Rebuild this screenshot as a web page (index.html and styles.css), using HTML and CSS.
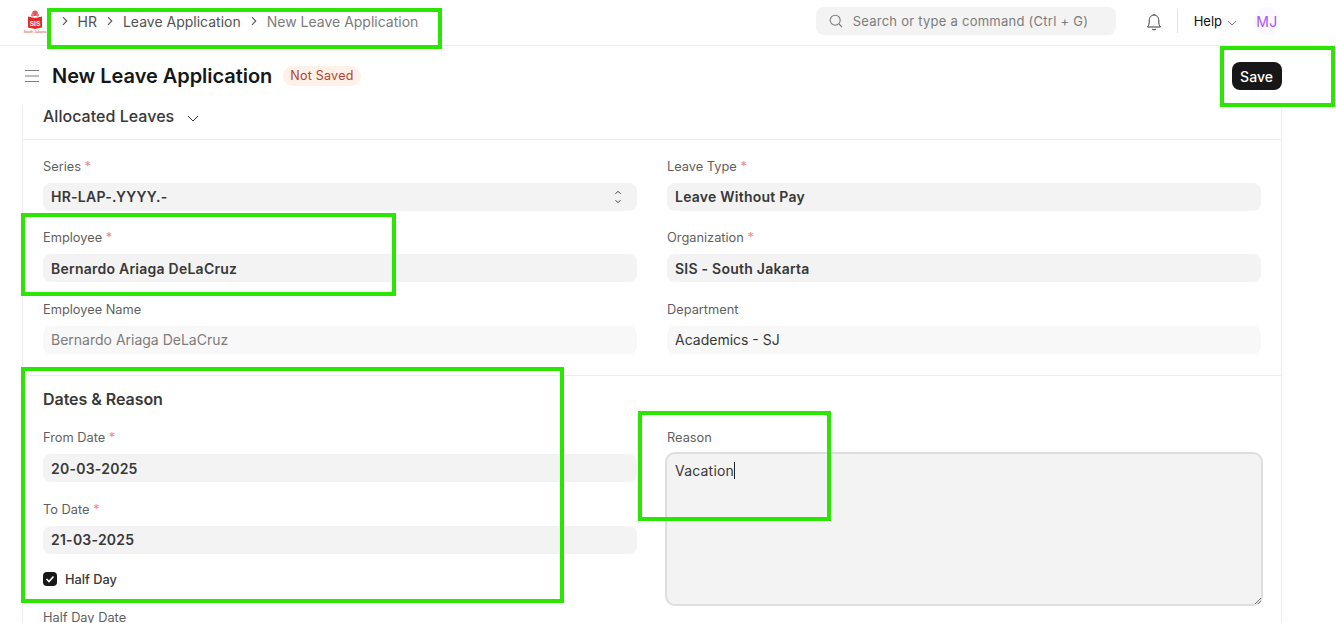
FILE: index.html
```html
<!DOCTYPE html>
<html lang="en">
<head>
<meta charset="utf-8">
<title>New Leave Application</title>
<link rel="stylesheet" href="styles.css">
</head>
<body>
<header class="navbar">
  <div class="logo">
    <svg class="logo-mark" width="18" height="20" viewBox="0 0 18 20">
      <circle cx="9" cy="3.2" r="2.8" fill="#e8505a"/>
      <circle cx="6.4" cy="5" r="1.6" fill="#ee7a80"/>
      <circle cx="11.6" cy="5" r="1.6" fill="#ee7a80"/>
      <path d="M2 6.5 L9 8 L16 6.5 V17.5 L9 19 L2 17.5 Z" fill="#e22d27"/>
      <text class="logo-sis" x="9" y="15.5" text-anchor="middle">SIS</text>
    </svg>
    <span class="logo-caption">South Jakarta</span>
  </div>
  <nav class="crumbs">
    <svg class="chev" width="10" height="10" viewBox="0 0 10 10"><path d="M3 1.2 L6.8 5 L3 8.8"/></svg>
    <span class="crumb">HR</span>
    <svg class="chev" width="10" height="10" viewBox="0 0 10 10"><path d="M3 1.2 L6.8 5 L3 8.8"/></svg>
    <span class="crumb">Leave Application</span>
    <svg class="chev" width="10" height="10" viewBox="0 0 10 10"><path d="M3 1.2 L6.8 5 L3 8.8"/></svg>
    <span class="crumb current">New Leave Application</span>
  </nav>
  <div class="nav-right">
    <div class="search">
      <svg width="14" height="14" viewBox="0 0 14 14" class="search-icon"><circle cx="6.2" cy="6.2" r="5"/><path d="M10 10 L13 13"/></svg>
      <span>Search or type a command (Ctrl + G)</span>
    </div>
    <svg class="bell" width="16" height="18" viewBox="0 0 16 18"><path d="M1.5 14 C3 12.4 3.2 10.5 3.2 8 C3.2 4.4 5.2 2 8 2 C10.8 2 12.8 4.4 12.8 8 C12.8 10.5 13 12.4 14.5 14 Z"/><path d="M8 2 V1"/><path d="M6 16 C6.8 17 9.2 17 10 16"/></svg>
    <span class="nav-sep"></span>
    <span class="help">Help
      <svg width="10" height="6" viewBox="0 0 10 6"><path d="M1 1 L5 5 L9 1"/></svg>
    </span>
    <span class="avatar">MJ</span>
  </div>
</header>

<section class="page-head">
  <div class="head-left">
    <svg class="menu" width="16" height="14" viewBox="0 0 16 14"><path d="M1 1.5 H15 M1 7 H15 M1 12.5 H15"/></svg>
    <h1>New Leave Application</h1>
    <span class="pill">Not Saved</span>
  </div>
  <button class="save" type="button">Save</button>
</section>

<main class="card">
  <div class="collapse-head">
    <span>Allocated Leaves</span>
    <svg width="12" height="7" viewBox="0 0 12 7"><path d="M1 1 L6 6 L11 1"/></svg>
  </div>

  <div class="section first">
    <div class="col">
      <div class="field"><label>Series <i>*</i></label>
        <div class="input strong">HR-LAP-.YYYY.-
          <svg class="updown" width="8" height="14" viewBox="0 0 8 14"><path d="M1.5 3.8 L4 1.3 L6.5 3.8 M1.5 10.2 L4 12.7 L6.5 10.2"/></svg>
        </div></div>
      <div class="field"><label>Employee <i>*</i></label><div class="input strong">Bernardo Ariaga DeLaCruz</div></div>
      <div class="field"><label>Employee Name</label><div class="input readonly">Bernardo Ariaga DeLaCruz</div></div>
    </div>
    <div class="col">
      <div class="field"><label>Leave Type <i>*</i></label><div class="input strong">Leave Without Pay</div></div>
      <div class="field"><label>Organization <i>*</i></label><div class="input strong">SIS - South Jakarta</div></div>
      <div class="field"><label>Department</label><div class="input plain">Academics - SJ</div></div>
    </div>
  </div>

  <div class="section second">
    <h2>Dates &amp; Reason</h2>
    <div class="cols">
      <div class="col">
        <div class="field"><label>From Date <i>*</i></label><div class="input strong">20-03-2025</div></div>
        <div class="field"><label>To Date <i>*</i></label><div class="input strong">21-03-2025</div></div>
        <div class="check">
          <span class="box"><svg width="10" height="8" viewBox="0 0 10 8"><path d="M1.5 4 L4 6.5 L8.5 1.5"/></svg></span>
          <span>Half Day</span>
        </div>
        <label>Half Day Date</label>
      </div>
      <div class="col">
        <div class="field"><label>Reason</label>
          <div class="textarea"><span>Vacation</span><span class="caret"></span>
            <svg class="grip" width="6" height="6" viewBox="0 0 6 6"><path d="M0 6 L6 0 M3 6 L6 3"/></svg>
          </div></div>
      </div>
    </div>
  </div>
</main>

<div class="mark mark-crumbs"></div>
<div class="mark mark-save"></div>
<div class="mark mark-employee"></div>
<div class="mark mark-dates"></div>
<div class="mark mark-reason"></div>
</body>
</html>
```
FILE: styles.css
```css
* { box-sizing: border-box; }
html, body { height: 623px; overflow: hidden; }
body {
  margin: 0;
  position: relative;
  background: #fff;
  font-family: Inter, "Noto Sans", sans-serif;
  color: #383838;
  font-size: 13px;
}
svg { display: block; fill: none; }

.navbar {
  height: 46px;
  border-bottom: 1px solid #ededed;
  display: flex;
  align-items: center;
  padding: 0 56px 3px 24px;
}
.logo { width: 24px; margin-right: 11.5px; display: flex; flex-direction: column; align-items: center; margin-top: 2px; }
.logo-mark { margin-left: -2px; }
.logo-sis { font: 700 6.5px "Liberation Sans", sans-serif; fill: #fff; }
.logo-caption { font: 3.7px "Liberation Sans", sans-serif; color: #e0413a; white-space: nowrap; margin-left: -2px; line-height: 5px; }
.crumbs { display: flex; align-items: center; font-size: 14px; color: #525252; }
.chev path { stroke: #525252; stroke-width: 1.1; }
.chev { margin-right: 8px; }
.crumb { margin-right: 8px; }
.crumb.current { color: #7c7c7c; }
.nav-right { margin-left: auto; display: flex; align-items: center; }
.search {
  width: 300px;
  height: 28px;
  background: #f3f3f3;
  border-radius: 8px;
  display: flex;
  align-items: center;
  padding-left: 13px;
  color: #7c7c7c;
  font-size: 13px;
  letter-spacing: 0.25px;
  gap: 10px;
}
.search-icon circle, .search-icon path { stroke: #7c7c7c; stroke-width: 1.1; }
.bell { margin-left: 30px; margin-top: 1px; }
.bell path { stroke: #383838; stroke-width: 1; }
.nav-sep { width: 1px; height: 24px; background: #e2e2e2; margin-left: 15px; margin-right: 16px; }
.help { display: flex; align-items: center; gap: 5px; color: #111; font-size: 13px; }
.help svg { margin-top: 3px; }
.help path { stroke: #7c7c7c; stroke-width: 1; }
.avatar {
  width: 26px;
  height: 28px;
  border-radius: 50%;
  background: #fbf8ff;
  color: #a855f7;
  font-size: 14px;
  letter-spacing: 0.5px;
  display: flex;
  align-items: center;
  justify-content: center;
  margin-left: 17px;
}

.page-head {
  height: 60px;
  display: flex;
  align-items: center;
  justify-content: space-between;
  padding: 0 54px 0 24px;
}
.head-left { display: flex; align-items: center; }
.menu path { stroke: #7c7c7c; stroke-width: 1.2; }
h1 { margin: 0 10.5px 0 12px; font-size: 20px; line-height: 28px; font-weight: 600; color: #171717; letter-spacing: -0.05px; }
.pill {
  height: 20px;
  padding: 0 7.5px;
  border-radius: 10px;
  background: #fff0e8;
  color: #b5432a;
  font-size: 12.5px;
  line-height: 20px;
  letter-spacing: 0.25px;
}
.save {
  width: 50px;
  height: 28px;
  border: 0;
  border-radius: 8px;
  background: #171717;
  color: #fff;
  font: 500 14px Inter, sans-serif;
  padding: 0 1px 0 0;
}

.card {
  margin: 0 54px 0 22px;
  border-left: 1px solid #ededed;
  border-right: 1px solid #ededed;
  height: 517px;
  overflow: hidden;
}
.collapse-head {
  height: 34px;
  border-bottom: 1px solid #ededed;
  padding: 0 20px 13px;
  display: flex;
  align-items: center;
  gap: 13px;
  font-size: 16px;
  font-weight: 500;
  letter-spacing: 0.03px;
  color: #383838;
}
.collapse-head svg { margin-top: 4px; }
.collapse-head path { stroke: #383838; stroke-width: 1; }
.section { padding: 17.9px 20px 0; }
.section.first {
  display: grid;
  grid-template-columns: 1fr 1fr;
  column-gap: 30px;
  border-bottom: 1px solid #ededed;
  height: 236px;
}
.section.second { padding-top: 14px; }
h2 { margin: 0 0 20.4px; font-size: 16px; line-height: 19px; font-weight: 600; letter-spacing: -0.05px; color: #383838; }
.cols { display: grid; grid-template-columns: 1fr 1fr; column-gap: 30px; }
.field { height: 71.5px; }
label { display: block; height: 18.4px; margin-bottom: 6.6px; font-size: 12.8px; line-height: 18.4px; color: #5f5f5f; }
label i { font-style: normal; color: #e88; }
.input {
  height: 28px;
  background: #f3f3f3;
  border-radius: 8px;
  padding: 0 8px 0.5px;
  display: flex;
  align-items: center;
  justify-content: space-between;
  font-size: 14px;
  color: #383838;
}
.input.strong { font-weight: 600; letter-spacing: 0.24px; }
.input.plain { background: #f8f8f8; font-weight: 400; }
.input.readonly { background: #f8f8f8; color: #7c7c7c; }
.updown path { stroke: #383838; stroke-width: 1; }
.updown { margin-right: 7px; }
.check { display: flex; align-items: center; gap: 8px; height: 20px; margin-top: -3.4px; margin-bottom: 20.3px; color: #383838; font-size: 12.8px; font-weight: 500; }
.box {
  width: 14px;
  height: 14px;
  background: #171717;
  border-radius: 4px;
  display: flex;
  align-items: center;
  justify-content: center;
}
.box path { stroke: #fff; stroke-width: 1.6; }
.textarea {
  position: relative;
  margin: -2.4px -2px 0;
  height: 154px;
  background: #f3f3f3;
  border: 2px solid #dedede;
  border-radius: 10px;
  padding: 7px 8px;
  font-size: 14px;
  line-height: 20px;
  letter-spacing: 0.2px;
  color: #383838;
  display: flex;
  align-items: flex-start;
}
.caret { width: 1px; height: 17px; background: #222; margin-top: 1px; }
.grip { position: absolute; right: 0; bottom: 0; }
.grip path { stroke: #555; stroke-width: .8; }

.mark { position: absolute; border: 4px solid #2ae600; pointer-events: none; }
.mark-crumbs { left: 47px; top: 8px; width: 395px; height: 41px; }
.mark-save { left: 1220px; top: 46px; width: 115px; height: 61px; }
.mark-employee { left: 21px; top: 213px; width: 375px; height: 83px; }
.mark-dates { left: 21px; top: 367px; width: 543px; height: 236px; }
.mark-reason { left: 638px; top: 411px; width: 193px; height: 110px; }
```
